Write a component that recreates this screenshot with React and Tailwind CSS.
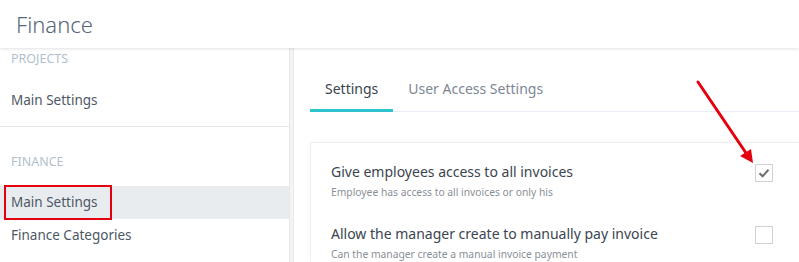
import React from "react";

function Checkbox({ checked }) {
  return (
    <div className="mt-[2px] mr-[26px] flex h-[18px] w-[18px] shrink-0 items-center justify-center border border-[#d2d2d2] bg-white">
      {checked && (
        <svg width="12" height="10" viewBox="0 0 12 10">
          <path d="M1.5 5.2 L4.6 8.2 L10.5 1.8" fill="none" stroke="#6f6f6f" strokeWidth="2" />
        </svg>
      )}
    </div>
  );
}

function Setting({ title, sub, checked, className = "" }) {
  return (
    <div className={"flex items-start justify-between " + className}>
      <div>
        <div className="text-[14px] leading-[20px] text-[#3b4550]">{title}</div>
        <div className="mt-[2px] text-[10.3px] leading-[16px] text-[#8a9098]">{sub}</div>
      </div>
      <Checkbox checked={checked} />
    </div>
  );
}

export default function App() {
  return (
    <div
      className="relative h-[262px] w-[799px] overflow-hidden bg-white"
      style={{ fontFamily: '"Noto Sans", "Open Sans", sans-serif' }}
    >
      <header className="relative z-10 flex h-[48px] items-center bg-white pl-[16px] shadow-[0_1px_3px_rgba(0,0,0,0.12)]">
        <h1 className="text-[22px] font-light leading-none text-[#56677a]">Finance</h1>
      </header>

      <div className="flex h-[214px]">
        <aside className="w-[289px] shrink-0 bg-white">
          <div className="pl-[11px] text-[12.5px] uppercase leading-[22px] text-[#b3bfcc]">Projects</div>
          <div className="mt-[14px] pl-[11px] text-[13.5px] leading-[33px] text-[#4c5865]">Main Settings</div>
          <div className="mt-[9px] border-t border-[#e8e8e8]" />
          <div className="mt-[24px] pl-[11px] text-[12.5px] uppercase leading-[22px] text-[#b3bfcc]">Finance</div>
          <div className="relative mt-[13px] bg-[#e9ecef] pl-[11px] text-[13.5px] leading-[33px] text-[#4c5865]">
            Main Settings
            <div className="pointer-events-none absolute left-[4px] top-[-1px] h-[35px] w-[108px] border-2 border-[#e3000f]" />
          </div>
          <div className="pl-[11px] text-[13.5px] leading-[33px] text-[#4c5865]">Finance Categories</div>
        </aside>
        <div className="w-[5px] shrink-0 border-x border-[#e9e9e9] bg-[#f4f4f4]" />

        <main className="flex-1 pl-[16px] pt-[18px]">
          <div className="flex border-b border-[#ebebf5]">
            <div className="-mb-px border-b-[3px] border-[#2ec4cf] px-[15px] pb-[10px] pt-[13px] text-[14px] leading-[20px] text-[#3b4550]">
              Settings
            </div>
            <div className="-mb-px border-b-[3px] border-transparent px-[15px] pb-[10px] pt-[13px] text-[14px] leading-[20px] text-[#7d8794]">
              User Access Settings
            </div>
          </div>

          <div className="mt-[30px] rounded-tl-[3px] border-l border-t border-[#f0f0f0] bg-white pl-[20px] pt-[19px] shadow-[0_0_4px_rgba(0,0,0,0.04)]">
            <Setting
              title="Give employees access to all invoices"
              sub="Employee has access to all invoices or only his"
              checked
            />
            <Setting
              className="mt-[24px]"
              title="Allow the manager create to manually pay invoice"
              sub="Can the manager create a manual invoice payment"
            />
          </div>
        </main>
      </div>

      <svg
        className="pointer-events-none absolute left-0 top-0 z-20"
        width="799"
        height="262"
        viewBox="0 0 799 262"
      >
        <line x1="698" y1="82" x2="746" y2="153" stroke="#e5000d" strokeWidth="3" strokeLinecap="round" />
        <polygon points="753,163 740,156 751,149" fill="#e5000d" />
      </svg>
    </div>
  );
}
